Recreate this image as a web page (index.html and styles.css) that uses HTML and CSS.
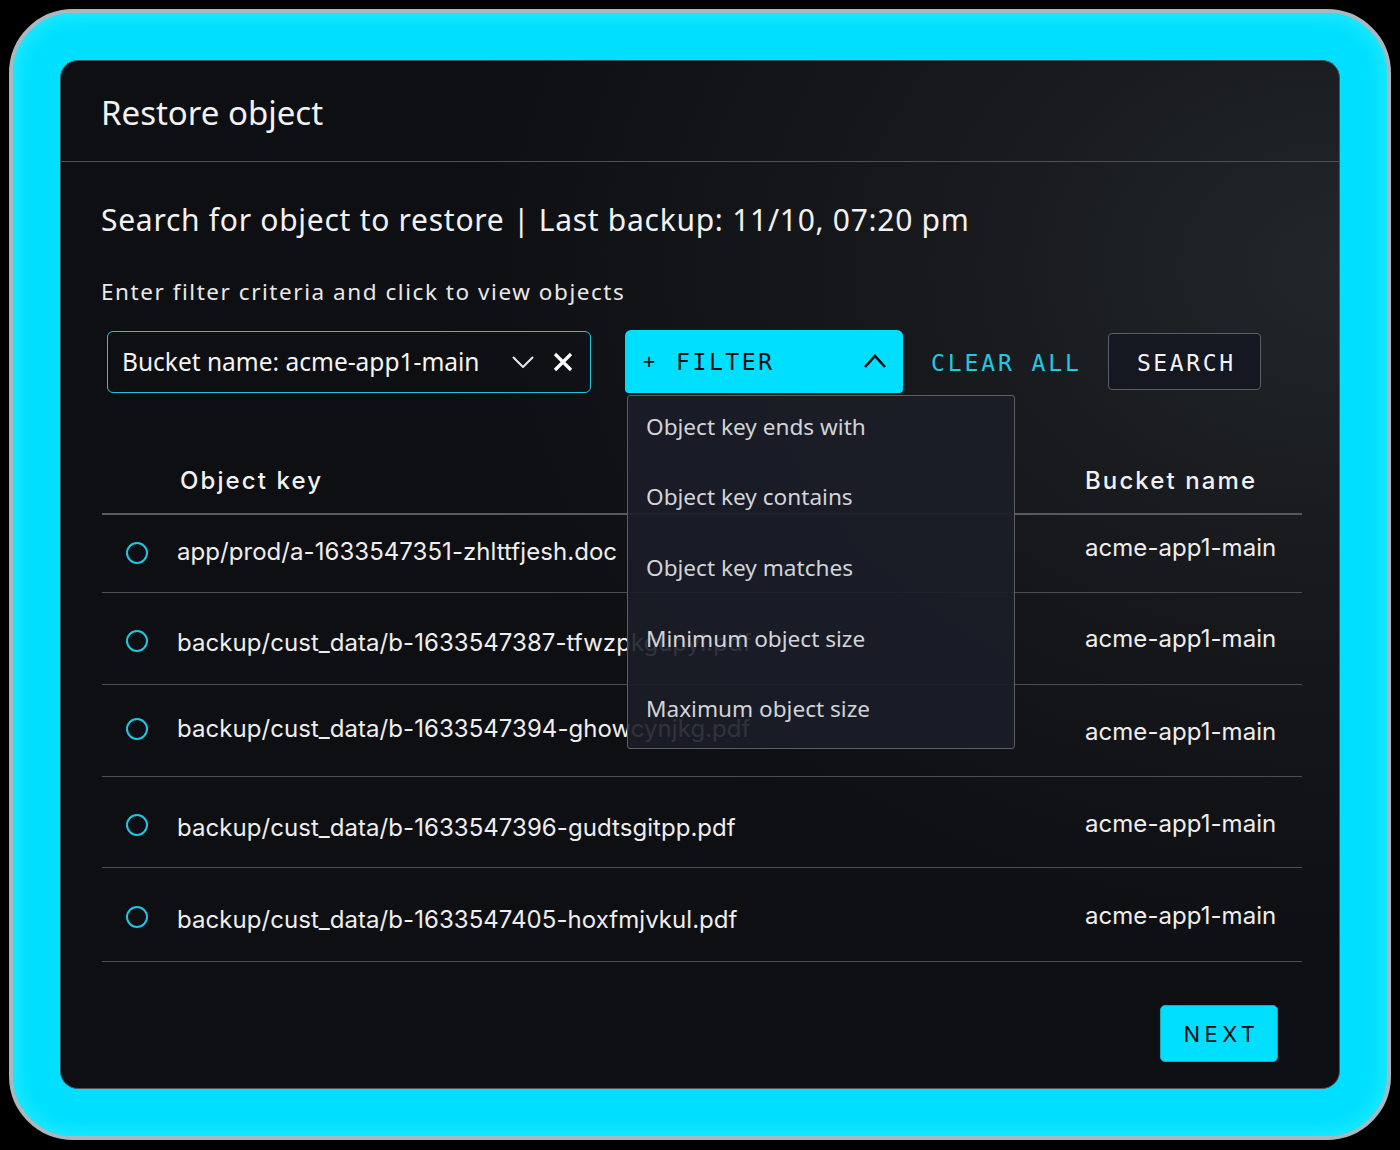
FILE: index.html
```html
<!DOCTYPE html>
<html>
<head>
<meta charset="utf-8">
<link rel="stylesheet" href="styles.css">
</head>
<body>
<div class="glow">
  <div class="dialog">
    <div class="dialog-header">
      <h1 class="title">Restore object</h1>
    </div>
    <div class="dialog-body">
      <h2 class="subtitle">Search for object to restore | Last backup: 11/10, 07:20 pm</h2>
      <p class="hint">Enter filter criteria and click to view objects</p>
      <div class="controls">
        <div class="chip-input">
          <span class="chip-text">Bucket name: acme-app1-main</span>
          <svg class="chev-down" width="22" height="12" viewBox="0 0 22 12"><path d="M1 1 L11 11 L21 1" fill="none" stroke="#e8e8e8" stroke-width="2"/></svg>
          <svg class="close-x" width="20" height="20" viewBox="0 0 20 20"><path d="M2 2 L18 18 M18 2 L2 18" fill="none" stroke="#ffffff" stroke-width="3.2"/></svg>
        </div>
        <div class="filter-wrap">
          <button class="filter-btn">
            <span class="plus">+</span>
            <span class="filter-label">FILTER</span>
            <svg class="chev-up" width="22" height="14" viewBox="0 0 22 14"><path d="M1 13 L11 2 L21 13" fill="none" stroke="#0b0d10" stroke-width="2.6"/></svg>
          </button>
          <ul class="menu">
            <li>Object key ends with</li>
            <li>Object key contains</li>
            <li>Object key matches</li>
            <li>Minimum object size</li>
            <li>Maximum object size</li>
          </ul>
        </div>
        <button class="clear-btn">CLEAR ALL</button>
        <button class="search-btn">SEARCH</button>
      </div>
      <div class="table">
        <div class="thead">
          <div class="c-radio"></div>
          <div class="c-key">Object key</div>
          <div class="c-bucket">Bucket name</div>
        </div>
        <div class="row r1">
          <div class="c-radio"><span class="radio"></span></div>
          <div class="c-key">app/prod/a-1633547351-zhlttfjesh.doc</div>
          <div class="c-bucket">acme-app1-main</div>
        </div>
        <div class="row r2">
          <div class="c-radio"><span class="radio"></span></div>
          <div class="c-key">backup/cust_data/b-1633547387-tfwzpkgupyi.pdf</div>
          <div class="c-bucket">acme-app1-main</div>
        </div>
        <div class="row r3">
          <div class="c-radio"><span class="radio"></span></div>
          <div class="c-key">backup/cust_data/b-1633547394-ghowcynjkg.pdf</div>
          <div class="c-bucket">acme-app1-main</div>
        </div>
        <div class="row r4">
          <div class="c-radio"><span class="radio"></span></div>
          <div class="c-key">backup/cust_data/b-1633547396-gudtsgitpp.pdf</div>
          <div class="c-bucket">acme-app1-main</div>
        </div>
        <div class="row r5">
          <div class="c-radio"><span class="radio"></span></div>
          <div class="c-key">backup/cust_data/b-1633547405-hoxfmjvkul.pdf</div>
          <div class="c-bucket">acme-app1-main</div>
        </div>
      </div>
      <div class="footer">
        <button class="next-btn">NEXT</button>
      </div>
    </div>
  </div>
</div>
</body>
</html>
```

FILE: styles.css
```css
* { box-sizing: border-box; }
html, body {
  margin: 0;
  padding: 0;
  background: #000;
  width: 1400px;
  height: 1150px;
  overflow: hidden;
}
.glow {
  margin: 9px 9px 0 9px;
  width: 1382px;
  height: 1131px;
  border: 4px solid #a7b9be;
  border-radius: 64px;
  background: #00dfff;
  padding: 47px;
  box-shadow: inset 0 0 16px 6px rgba(40, 236, 255, 0.7);
}
.dialog {
  width: 1280px;
  height: 1029px;
  border: 1px solid #505459;
  border-radius: 18px;
  background: radial-gradient(ellipse 900px 700px at 100% 20%, #22262a 0%, #16181b 50%, #0e0f12 100%), #0e0f12;
  background-color: #0e0f12;
  display: flex;
  flex-direction: column;
  font-family: "Noto Sans", "Open Sans", sans-serif;
  color: #f0f0f0;
  overflow: hidden;
}
.dialog-header {
  height: 101px;
  border-bottom: 1px solid #4c4f54;
  display: flex;
  align-items: center;
  padding-left: 40px;
  flex-shrink: 0;
}
.title {
  margin: 0;
  font-size: 33px;
  font-weight: 400;
  line-height: 40px;
  color: #f2f2f2;
  position: relative;
  top: 2px;
}
.dialog-body {
  padding: 0 36px 0 40px;
  display: flex;
  flex-direction: column;
  flex: 1;
}
.subtitle {
  margin: 38px 0 0 0;
  font-size: 30px;
  font-weight: 400;
  line-height: 40px;
  color: #f2f2f2;
  letter-spacing: 0.72px;
}
.hint {
  margin: 37px 0 0 0;
  font-size: 22.5px;
  line-height: 30px;
  color: #e8e8e8;
  letter-spacing: 1.55px;
}
.controls {
  margin-top: 22px;
  height: 64px;
  display: flex;
  align-items: center;
  padding-left: 6px;
  position: relative;
}
.chip-input {
  width: 484px;
  height: 62px;
  border: 1.5px solid #22c3dd;
  border-radius: 6px;
  display: flex;
  align-items: center;
  padding-left: 14px;
  margin-top: 1px;
}
.chip-text {
  font-size: 24.5px;
  color: #f4f4f4;
  flex: 1;
}
.chev-down { margin-right: 19px; }
.close-x { margin-right: 17px; }
.filter-wrap {
  margin-left: 34px;
  position: relative;
  height: 63px;
}
button {
  font-family: "DejaVu Sans Mono", "Liberation Mono", monospace;
  cursor: pointer;
}
.filter-btn {
  width: 278px;
  height: 63px;
  background: #00dfff;
  border: none;
  border-radius: 6px 6px 4px 4px;
  display: flex;
  align-items: center;
  padding: 0 0 0 18px;
  font-size: 23px;
  letter-spacing: 2.6px;
  color: #0b0d10;
}
.plus { font-size: 20px; width: 33px; text-align: left; }
.filter-label { position: relative; top: 1px; }
.chev-up { margin-left: auto; margin-right: 17px; }
.menu {
  position: absolute;
  left: 2px;
  top: 65px;
  width: 388px;
  height: 354px;
  margin: 0;
  padding: 0;
  list-style: none;
  background: rgba(27, 29, 40, 0.9);
  border: 1.5px solid #5b5e64;
  border-radius: 3px;
  z-index: 10;
}
.menu li {
  height: 70.6px;
  padding: 0 0 9px 18px;
  display: flex;
  align-items: center;
  font-size: 22.6px;
  color: #d2d4d8;
}
.clear-btn {
  margin-left: 28px;
  background: none;
  border: none;
  padding: 0;
  font-size: 23px;
  letter-spacing: 2.9px;
  color: #22c8e4;
  position: relative;
  top: 2px;
}
.search-btn {
  margin-left: 26px;
  width: 153px;
  height: 57px;
  background: #151821;
  border: 1.5px solid #5a5d63;
  border-radius: 4px;
  font-size: 23px;
  letter-spacing: 2.6px;
  color: #f2f2f2;
  padding: 4px 0 0 4px;
}
.table {
  margin-top: 58px;
  width: 1200px;
  margin-left: 1px;
  font-family: "Inter", "Noto Sans", sans-serif;
}
.thead {
  height: 64px;
  display: flex;
  align-items: center;
  border-bottom: 2px solid #56595d;
  font-size: 24px;
  font-weight: 500;
  letter-spacing: 2.1px;
  color: #f2f2f2;
}
.thead .c-key, .thead .c-bucket { position: relative; top: -2px; }
.c-radio { width: 70px; flex-shrink: 0; display: flex; justify-content: center; position: relative; }
.thead .c-key { padding-left: 8px; }
.c-key { flex: 1; white-space: nowrap; padding-left: 5px; position: relative; }
.c-bucket { width: 217px; flex-shrink: 0; position: relative; }
.row {
  display: flex;
  align-items: center;
  border-bottom: 1.5px solid #4a4d51;
  font-size: 24px;
  color: #eeeeee;
  letter-spacing: 0.05px;
}
.r1 { height: 78px; }
.r2 { height: 92px; }
.r3 { height: 92px; }
.r4 { height: 91px; }
.r5 { height: 94px; }
.r1 .c-key { top: -2px; }
.r1 .c-bucket { top: -6px; }
.r1 .c-radio { top: -1px; }
.r2 .c-key { top: 4px; }
.r2 .c-bucket { top: 0; }
.r2 .c-radio { top: 2px; }
.r3 .c-key { top: -2px; }
.r3 .c-bucket { top: 1px; }
.r3 .c-radio { top: -2px; }
.r4 .c-key { top: 5px; }
.r4 .c-bucket { top: 1px; }
.r4 .c-radio { top: 3px; }
.r5 .c-key { top: 5px; }
.r5 .c-bucket { top: 1px; }
.r5 .c-radio { top: 2px; }
.radio {
  width: 22px;
  height: 22px;
  border: 2.2px solid #1fc6e3;
  border-radius: 50%;
  display: block;
}
.footer {
  display: flex;
  justify-content: flex-end;
  margin-top: 43px;
  padding-right: 25px;
}
.next-btn {
  width: 118px;
  height: 57px;
  background: #00dfff;
  border: 1px solid #1aa9c0;
  border-radius: 5px;
  font-family: "Inter", "Noto Sans", sans-serif;
  font-size: 22px;
  letter-spacing: 4.5px;
  color: #0b0d10;
  padding: 0 0 0 5px;
}
```
